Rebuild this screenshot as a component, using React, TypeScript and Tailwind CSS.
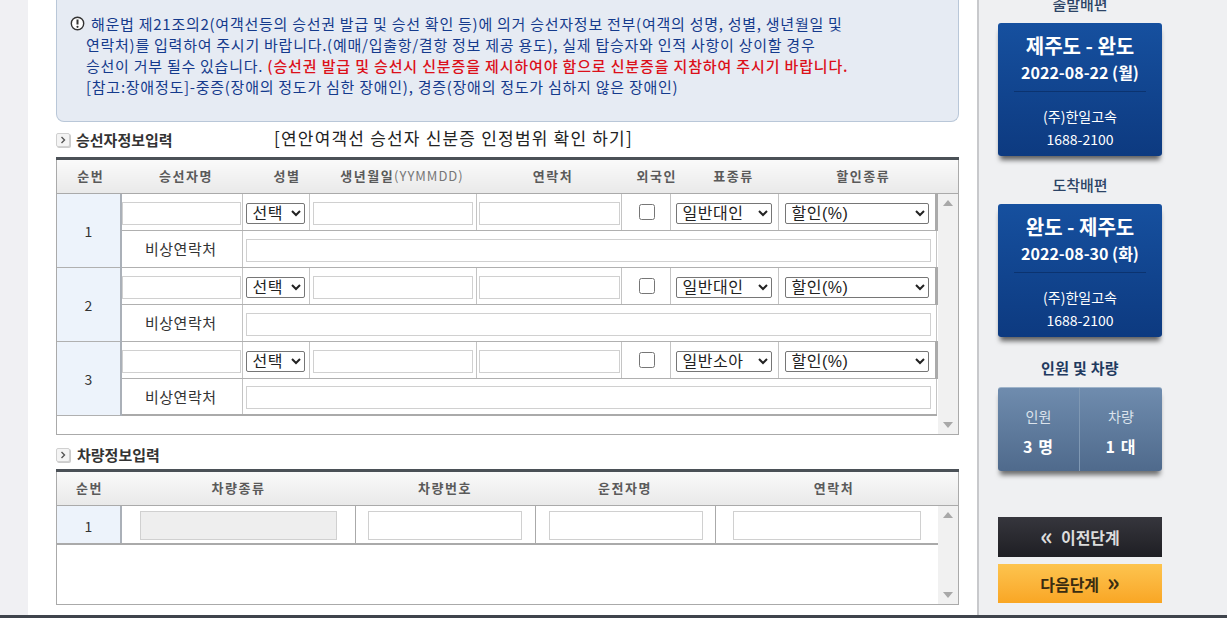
import React from 'react';

const krFont = "font-['Noto_Sans_CJK_KR','Liberation_Sans',sans-serif]";

const passengers = [
  { no: 1, ticket: '일반대인' },
  { no: 2, ticket: '일반대인' },
  { no: 3, ticket: '일반소아' },
];

const inputCls = 'block h-[23px] border border-[#d0d0d0] bg-white';
const selectCls = "block h-[21px] border border-[#767676] rounded-[2px] bg-white font-['Liberation_Sans','Noto_Sans_CJK_KR',sans-serif] text-[16px] tracking-[0.5px] py-0 pl-[2px] text-[#222]";
const thCls = 'font-bold text-[13px] tracking-[1.5px] text-[#5a5a5a] text-center pb-[2px]';

const SectionIcon = () => (
  <span className="flex items-center justify-center w-[14px] h-[14px] border border-[#d0d0d0] rounded-[2px] bg-[#f4f4f4] shadow-[1px_1px_0_#ccc]">
    <svg width="6" height="8" viewBox="0 0 6 8" fill="none" stroke="#555" strokeWidth="1.4">
      <path d="M1.5 1 L4.5 4 L1.5 7" />
    </svg>
  </span>
);

const ScrollBar = () => (
  <div className="w-[20px] bg-[#f1f1f1] flex flex-col justify-between items-center py-[6px] shrink-0">
    <span className="w-0 h-0 border-x-[5px] border-x-transparent border-b-[6px] border-b-[#a8a8a8]" />
    <span className="w-0 h-0 border-x-[5px] border-x-transparent border-t-[6px] border-t-[#a8a8a8]" />
  </div>
);

const SideTitle = ({ children }: { children: React.ReactNode }) => (
  <div className="text-center text-[15px] leading-[20px] font-medium text-[#2c4466]">{children}</div>
);

const RouteCard = ({ route, date }: { route: string; date: string }) => (
  <div className="mt-[9px] w-[164px] h-[133px] rounded-[3px] bg-gradient-to-b from-[#16509f] to-[#0d3a80] text-white text-center shadow-[0_6px_5px_-2px_rgba(0,0,0,0.6)] flex flex-col">
    <div className="mt-[9px] text-[20px] leading-[28px] font-bold">{route}</div>
    <div className="text-[16px] leading-[24px] font-bold">{date}</div>
    <div className="mt-[7px] mx-[16px] border-t border-[#0b3370]" />
    <div className="mt-[13px] text-[14px] leading-[22px]">(주)한일고속</div>
    <div className="mt-[1px] text-[14px] leading-[22px]">1688-2100</div>
  </div>
);

export default function App() {
  return (
    <div className={`${krFont} w-[1227px] h-[642px] overflow-hidden bg-white`}>
      <div className="h-[615px] flex bg-[#f0f0f3]">
        {/* main column */}
        <div className="ml-[28px] w-[949px] bg-white px-[28px] pr-[18px]">
          <div className="h-[122px] bg-[#e6ebf3] border border-t-0 border-[#b9c7d8] rounded-b-[8px] pt-[13px] pl-[29px] text-[15px] leading-[21px] text-[#143a8c] tracking-[0.74px] whitespace-nowrap">
            <div className="flex items-center -ml-[16px]">
              <svg width="15" height="15" viewBox="0 0 15 15" className="mr-[6px] shrink-0">
                <circle cx="7.5" cy="7.5" r="6.2" fill="#fff" stroke="#333" strokeWidth="1.4" />
                <path d="M7.5 3.5 V8.5" stroke="#333" strokeWidth="2" />
                <circle cx="7.5" cy="10.8" r="1.1" fill="#333" />
              </svg>
              <span>해운법 제21조의2(여객선등의 승선권 발급 및 승선 확인 등)에 의거 승선자정보 전부(여객의 성명, 성별, 생년월일 및</span>
            </div>
            <div>연락처)를 입력하여 주시기 바랍니다.(예매/입출항/결항 정보 제공 용도), 실제 탑승자와 인적 사항이 상이할 경우</div>
            <div>
              승선이 거부 될수 있습니다.{' '}
              <span className="text-[#dc101a] font-medium tracking-[0.85px]">(승선권 발급 및 승선시 신분증을 제시하여야 함으로 신분증을 지참하여 주시기 바랍니다.</span>
            </div>
            <div>[참고:장애정도]-중증(장애의 정도가 심한 장애인), 경증(장애의 정도가 심하지 않은 장애인)</div>
          </div>

          <div className="h-[35px] flex items-center">
            <SectionIcon />
            <span className="ml-[6px] w-[198px] text-[15px] font-bold text-[#333] mt-[1px]">승선자정보입력</span>
            <span className="text-[17px] text-[#222] tracking-[1.2px] -mt-[3px] whitespace-nowrap">[연안여객선 승선자 신분증 인정범위 확인 하기]</span>
          </div>

          {/* passenger table */}
          <div className="border-t-[3px] border-[#4b5157]">
            <table className="table-fixed border-collapse w-[903px] h-[34px] bg-gradient-to-b from-[#fafafa] to-[#e9e9e9] border-x border-b border-[#aaa]">
              <colgroup>
                <col className="w-[66px]" />
                <col className="w-[121px]" />
                <col className="w-[66px]" />
                <col className="w-[167px]" />
                <col className="w-[145px]" />
                <col className="w-[49px]" />
                <col className="w-[108px]" />
                <col />
              </colgroup>
              <thead>
                <tr>
                  <th className={`${thCls} pl-[2px]`}>순번</th>
                  <th className={`${thCls} pl-[6px]`}>승선자명</th>
                  <th className={`${thCls} pl-[21px] whitespace-nowrap`}>성별</th>
                  <th className={`${thCls} pl-[18px] whitespace-nowrap`}>
                    생년월일<span className="font-normal text-[13px] tracking-[1px] text-[#777]">(YYMMDD)</span>
                  </th>
                  <th className={`${thCls} pl-[8px]`}>연락처</th>
                  <th className={`${thCls} pl-[15px] whitespace-nowrap`}>외국인</th>
                  <th className={`${thCls} pl-[18px]`}>표종류</th>
                  <th className={`${thCls} pr-[10px]`}>할인종류</th>
                </tr>
              </thead>
            </table>
            <div className="flex w-[903px] h-[241px] border-x border-b border-[#aaa]">
              <div className="flex-1">
                <table className="table-fixed border-collapse w-[881px] text-[14px] text-[#333]">
                  <colgroup>
                    <col className="w-[64px]" />
                    <col className="w-[121px]" />
                    <col className="w-[67px]" />
                    <col className="w-[167px]" />
                    <col className="w-[145px]" />
                    <col className="w-[49px]" />
                    <col className="w-[108px]" />
                    <col />
                  </colgroup>
                  <tbody>
                    {passengers.map((p) => (
                      <React.Fragment key={p.no}>
                        <tr className={p.no === 1 ? 'h-[36px]' : 'h-[37px]'}>
                          <td rowSpan={2} className="bg-[#edf3fb] border-r-2 border-r-[#aab0b8] border-b border-b-[#b0b0b0] text-center text-[14px] pt-[3px]">{p.no}</td>
                          <td className="border-b border-b-[#b0b0b0] border-r border-r-[#c4c4c4] pr-[1px] pt-[3px]">
                            <input className={`${inputCls} w-full`} />
                          </td>
                          <td className="border-b border-b-[#b0b0b0] border-r border-r-[#c4c4c4] pl-[3px] pt-[3px]">
                            <select className={`${selectCls} w-[59px]`} defaultValue="선택">
                              <option>선택</option>
                            </select>
                          </td>
                          <td className="border-b border-b-[#b0b0b0] border-r border-r-[#c4c4c4] pl-[3px] pt-[3px]">
                            <input className={`${inputCls} w-[160px]`} />
                          </td>
                          <td className="border-b border-b-[#b0b0b0] border-r border-r-[#c4c4c4] pl-[2px] pt-[3px]">
                            <input className={`${inputCls} w-[141px]`} />
                          </td>
                          <td className="border-b border-b-[#b0b0b0] border-r border-r-[#c4c4c4] text-center pl-[3px]">
                            <input type="checkbox" className="w-[16px] h-[16px] m-0 align-middle -mt-[3px]" />
                          </td>
                          <td className="border-b border-b-[#b0b0b0] border-r border-r-[#c4c4c4] pl-[5px] pt-[3px]">
                            <select className={`${selectCls} w-[96px]`} defaultValue={p.ticket}>
                              <option>{p.ticket}</option>
                            </select>
                          </td>
                          <td className="border-b border-b-[#b0b0b0] border-r-[3px] border-r-[#aaa] pl-[6px] pt-[3px]">
                            <select className={`${selectCls} w-[144px]`} defaultValue="할인(%)">
                              <option>할인(%)</option>
                            </select>
                          </td>
                        </tr>
                        <tr className="h-[37px]">
                          <td className={`border-b ${p.no === 3 ? 'border-b-2 border-b-[#aaa]' : 'border-b-[#b0b0b0]'} border-r border-r-[#c4c4c4] text-center text-[15px] tracking-[0.5px] pr-[2px] pt-[2px]`}>비상연락처</td>
                          <td colSpan={6} className={`border-b ${p.no === 3 ? 'border-b-2 border-b-[#aaa]' : 'border-b-[#b0b0b0]'} border-r border-r-[#c4c4c4] pl-[3px] pt-[3px]`}>
                            <input className={`${inputCls} w-[685px]`} />
                          </td>
                        </tr>
                      </React.Fragment>
                    ))}
                  </tbody>
                </table>
              </div>
              <ScrollBar />
            </div>
          </div>

          <div className="mt-[9px] mb-[3px] h-[22px] flex items-center">
            <SectionIcon />
            <span className="ml-[7px] text-[15px] font-bold text-[#333]">차량정보입력</span>
          </div>

          {/* vehicle table */}
          <div className="border-t-[3px] border-[#4b5157]">
            <div className="w-[903px] h-[34px] bg-gradient-to-b from-[#fafafa] to-[#e9e9e9] border-x border-b border-[#aaa] grid grid-cols-[65px_233px_180px_180px_1fr] items-center">
              <div className={thCls}>순번</div>
              <div className={thCls}>차량종류</div>
              <div className={thCls}>차량번호</div>
              <div className={thCls}>운전자명</div>
              <div className={`${thCls} pr-[5px]`}>연락처</div>
            </div>
            <div className="flex w-[903px] h-[99px] border-x border-b border-[#aaa]">
              <div className="flex-1">
                <div className="h-[39px] border-b-2 border-[#aaa] grid grid-cols-[65px_234px_180px_180px_1fr] text-[14px] text-[#333]">
                  <div className="bg-[#edf3fb] border-r-2 border-[#aab0b8] flex items-center justify-center pt-[3px]">1</div>
                  <div className="border-r border-[#aaa] flex items-center pl-[18px] pt-[2px]">
                    <div className="w-[197px] h-[29px] bg-[#eeeeee] border border-[#d0d0d0]" />
                  </div>
                  <div className="border-r border-[#aaa] flex items-center pl-[12px] pt-[2px]">
                    <input className="block w-[154px] h-[29px] border border-[#d0d0d0]" />
                  </div>
                  <div className="border-r border-[#aaa] flex items-center pl-[13px] pt-[2px]">
                    <input className="block w-[154px] h-[29px] border border-[#d0d0d0]" />
                  </div>
                  <div className="flex items-center pl-[17px] pt-[2px]">
                    <input className="block w-[188px] h-[29px] border border-[#d0d0d0]" />
                  </div>
                </div>
              </div>
              <ScrollBar />
            </div>
          </div>
        </div>

        {/* sidebar */}
        <div className="w-[250px] border-l-2 border-[#c8c9cc] bg-[#eff0f2] pl-[19px]">
          <div className="w-[164px] -mt-[6px]">
            <SideTitle>출발배편</SideTitle>
            <RouteCard route="제주도 - 완도" date="2022-08-22 (월)" />
            <div className="mt-[19px]"><SideTitle>도착배편</SideTitle></div>
            <RouteCard route="완도 - 제주도" date="2022-08-30 (화)" />
            <div className="mt-[21px] text-center text-[15px] leading-[20px] font-bold tracking-[0.3px] text-[#1f3a60]">인원 및 차량</div>
            <div className="mt-[9px] h-[84px] rounded-[3px] bg-gradient-to-b from-[#6f8cae] to-[#4f6a8c] border-t border-[#9fb4ca] text-white text-center shadow-[0_6px_5px_-2px_rgba(0,0,0,0.55)] grid grid-cols-2">
              <div className="border-r border-[#7f98b3] pt-[16px]">
                <div className="text-[14px] leading-[24px] text-[#dbe3ec]">인원</div>
                <div className="mt-[6px] text-[16px] leading-[24px] font-bold tracking-[1px]">3 명</div>
              </div>
              <div className="pt-[16px]">
                <div className="text-[14px] leading-[24px] text-[#dbe3ec]">차량</div>
                <div className="mt-[6px] text-[16px] leading-[24px] font-bold tracking-[1px]">1 대</div>
              </div>
            </div>
            <div className="mt-[46px] h-[40px] bg-gradient-to-b from-[#36363d] to-[#1f1f24] flex items-center justify-center text-[16px] font-bold text-[#dcdcdc]">
              <span className="text-[24px] leading-none mr-[8px] -mt-[5px]">«</span>이전단계
            </div>
            <div className="mt-[7px] h-[39px] bg-gradient-to-b from-[#fdc44e] to-[#f9a623] flex items-center justify-center text-[16px] font-bold text-[#3a2c10]">
              다음단계<span className="text-[24px] leading-none ml-[8px] -mt-[5px]">»</span>
            </div>
          </div>
        </div>
      </div>
      <div className="h-[3px] bg-[#3f444c]" />
    </div>
  );
}
